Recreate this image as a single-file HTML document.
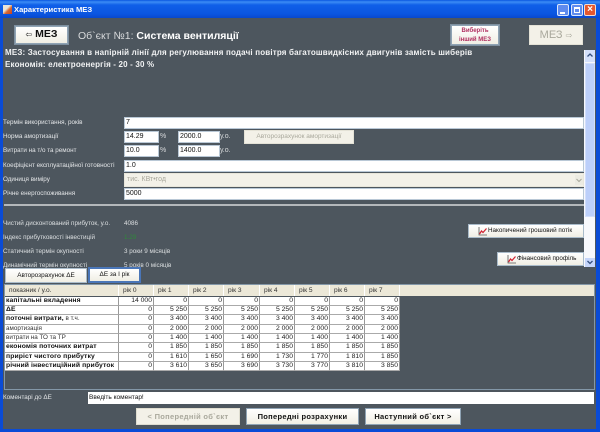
<!DOCTYPE html>
<html><head><meta charset="utf-8">
<style>
html,body{margin:0;padding:0;width:600px;height:432px;overflow:hidden;background:#0a4bd6}
*{box-sizing:border-box}
body{font-family:"Liberation Sans",sans-serif;position:relative}
#w{position:absolute;left:0;top:0;width:600px;height:432px;filter:blur(.3px);overflow:hidden}
.a{position:absolute;white-space:nowrap}
.l{position:absolute;white-space:nowrap;color:#e4e6e8;font-size:6.3px;line-height:12px;left:3px}
.i{position:absolute;background:#fff;color:#111;font-size:7px;line-height:10px;padding-left:1px;border:1px solid #b9c8d6;white-space:nowrap;overflow:hidden}
.u{font-size:7px;line-height:12px;color:#d8dadc}
.r{font-size:6.3px;line-height:12px;color:#dcdfe1}
.b{position:absolute;background:linear-gradient(#fff,#f0eee4);border:1px solid #8fa3b4;text-align:center;color:#111;white-space:nowrap}
.x{outline:1px solid #7d8f9f}
.d{background:#f3f1e8;border:1px solid #e4e2d6;color:#a9a89c}
.c{position:absolute;height:9.33px;background:#fff;border-right:1px solid #999;border-bottom:1px solid #aaa;font-size:6.8px;line-height:8.5px;color:#222;text-align:right;padding-right:1px;white-space:nowrap;overflow:hidden}
.n{text-align:left;padding:0 0 0 1px;color:#333;font-size:6.3px}
.bb{font-weight:bold;font-size:6.8px;letter-spacing:.1px;color:#111}
.h{position:absolute;top:285px;height:11px;font-size:6.6px;line-height:11px;color:#333;padding-left:4px;border-right:1px solid #fff}
.m{font-size:7.5px;line-height:15px;font-weight:bold;letter-spacing:.3px}
</style></head><body>
<div id="w">
<div class="a" style="left:0;top:0;width:600px;height:18px;background:linear-gradient(#0a56e0 0,#3c8cf5 2px,#0f5fe8 5px,#0a55e0 14px,#0848cc 18px)"></div>
<div class="a" style="left:3px;top:5px;width:9px;height:9px;background:linear-gradient(135deg,#e8e4d8 40%,#d86a30 60%,#c84020)"></div>
<div class="a" style="left:14px;top:4px;font-size:7.6px;line-height:12px;color:#fff;font-weight:bold">Характеристика МЕЗ</div>
<div class="a" style="left:557px;top:4px;width:12px;height:12px;background:#5f8bee;border:1px solid #dde8fb;border-radius:2px"><div class="a" style="left:2px;top:7px;width:5px;height:2px;background:#fff"></div></div>
<div class="a" style="left:571px;top:4px;width:12px;height:12px;background:#5f8bee;border:1px solid #dde8fb;border-radius:2px"><div class="a" style="left:2px;top:2px;width:6px;height:6px;border:1px solid #fff;border-top-width:2px"></div></div>
<div class="a" style="left:584px;top:4px;width:12px;height:12px;background:#e4572e;border:1px solid #f4dccf;border-radius:2px;color:#fff;font-size:10px;line-height:10px;text-align:center;font-weight:bold">×</div>

<div class="a" style="left:3px;top:18px;width:593px;height:411px;background:#4d565e"></div>

<div class="b x" style="left:15px;top:26px;width:53px;height:18px;font-size:10.5px;line-height:15px;font-weight:bold"><span style="font-size:8px;font-weight:normal">⇦</span> МЕЗ</div>
<div class="a" style="left:78px;top:29px;font-size:10.5px;line-height:15px;color:#d8dadc">Об`єкт №1: <b style="color:#fff">Система вентиляції</b></div>
<div class="b x" style="left:451px;top:25px;width:48px;height:20px;font-size:6px;line-height:9px;font-weight:bold;color:#b03060;padding-top:1px">Виберіть<br>інший МЕЗ</div>
<div class="b d" style="left:529px;top:25px;width:54px;height:20px;font-size:11px;line-height:18px;">МЕЗ <span style="font-size:8px">⇨</span></div>
<div class="a" style="left:5px;top:47px;font-size:8px;line-height:12px;color:#f2f3f4;font-weight:bold;letter-spacing:.17px">МЕЗ: Застосування в напірній лінії для регулювання подачі повітря багатошвидкісних двигунів замість шиберів</div>
<div class="a" style="left:5px;top:59px;font-size:8px;line-height:12px;color:#f2f3f4;font-weight:bold;letter-spacing:.17px">Економія: електроенергія - 20 - 30 %</div>

<div class="a" style="left:584px;top:50px;width:11px;height:217px;background:#f7f8fc"></div>
<div class="a" style="left:585px;top:50px;width:10px;height:12px;background:#d4e0fb"><svg width="10" height="12" style="display:block"><path d="M2.5 6.5L5 4L7.5 6.5" fill="none" stroke="#35507f" stroke-width="1.3"/></svg></div>
<div class="a" style="left:585px;top:63px;width:10px;height:154px;background:#bccffa;border:1px solid #d2defb"></div>
<div class="a" style="left:585px;top:258px;width:10px;height:9px;background:#c6d6fa"><svg width="10" height="9" style="display:block"><path d="M2.5 3L5 5.5L7.5 3" fill="none" stroke="#35507f" stroke-width="1.3"/></svg></div>

<div class="l" style="top:117px">Термін використання, років</div>
<div class="i" style="left:124px;top:117px;width:460px;height:12px">7</div>
<div class="l" style="top:131px">Норма амортизації</div>
<div class="i" style="left:124px;top:131px;width:35px;height:12px">14.29</div>
<div class="a u" style="left:160px;top:131px">%</div>
<div class="i" style="left:178px;top:131px;width:42px;height:12px">2000.0</div>
<div class="a u" style="left:220px;top:131px">у.о.</div>
<div class="b d" style="left:244px;top:130px;width:110px;height:14px;font-size:6.5px;line-height:12px">Авторозрахунок амортизації</div>
<div class="l" style="top:145px">Витрати на т/о та ремонт</div>
<div class="i" style="left:124px;top:145px;width:35px;height:12px">10.0</div>
<div class="a u" style="left:160px;top:145px">%</div>
<div class="i" style="left:178px;top:145px;width:42px;height:12px">1400.0</div>
<div class="a u" style="left:220px;top:145px">у.о.</div>
<div class="l" style="top:160px">Коефіцієнт експлуатаційної готовності</div>
<div class="i" style="left:124px;top:160px;width:460px;height:12px">1.0</div>
<div class="l" style="top:174px">Одиниця виміру</div>
<div class="i" style="left:124px;top:173px;width:460px;height:14px;background:#f3f1e8;border-color:#e8e6da;color:#a9a89c;line-height:12px;padding-left:2px">тис. КВт•год</div>
<div class="a" style="left:575px;top:175px;width:8px;height:10px;background:#ecebe2"><svg width="8" height="10" style="display:block"><path d="M1.5 4L4 6.5L6.5 4" fill="none" stroke="#a9a89c" stroke-width="1"/></svg></div>
<div class="l" style="top:188px">Річне енергоспоживання</div>
<div class="i" style="left:124px;top:188px;width:460px;height:12px">5000</div>
<div class="a" style="left:4px;top:204px;width:580px;height:2px;background:#b4b8bb"></div>

<div class="l" style="top:218px;color:#dcdfe1">Чистий дисконтований прибуток, у.о.</div>
<div class="a r" style="left:124px;top:218px">4086</div>
<div class="l" style="top:232px;color:#dcdfe1">Індекс прибутковості інвестицій</div>
<div class="a r" style="left:124px;top:232px;color:#2f8a3a">1.29</div>
<div class="l" style="top:246px;color:#dcdfe1">Статичний термін окупності</div>
<div class="a r" style="left:124px;top:246px">3 роки 9 місяців</div>
<div class="l" style="top:260px;color:#dcdfe1">Динамічний термін окупності</div>
<div class="a r" style="left:124px;top:260px">5 років 0 місяців</div>

<div class="b" style="left:468px;top:224px;width:116px;height:14px;font-size:6.3px;line-height:12px;text-align:left;padding-left:19px;border-color:#a9bbca"><svg class="a" style="left:9px;top:2px" width="9" height="9"><path d="M1 0V8H9" fill="none" stroke="#555" stroke-width=".8"/><path d="M1.5 7L3.5 4L5 5.5L8.5 1.5" fill="none" stroke="#d02030" stroke-width="1.2"/></svg>Накопичений грошовий потік</div>
<div class="b" style="left:497px;top:252px;width:87px;height:14px;font-size:6.3px;line-height:12px;text-align:left;padding-left:19px;border-color:#a9bbca"><svg class="a" style="left:9px;top:2px" width="9" height="9"><path d="M1 0V8H9" fill="none" stroke="#555" stroke-width=".8"/><path d="M1.5 7L3.5 4L5 5.5L8.5 1.5" fill="none" stroke="#d02030" stroke-width="1.2"/></svg>Фінансовий профіль</div>

<div class="a" style="left:4px;top:268px;width:584px;height:16px;background:#4d565e"></div>
<div class="b" style="left:5px;top:268px;width:82px;height:15px;font-size:6.4px;line-height:13px;border-color:#a9bbca">Авторозрахунок ΔЕ</div>
<div class="b" style="left:88px;top:267px;width:53px;height:16px;font-size:6.4px;line-height:12px;border:2px solid #4a76b8">ΔЕ за І рік</div>

<div class="a" style="left:4px;top:284px;width:591px;height:106px;border:1px solid #8397a8;background:#4d565e"></div>
<div class="a" style="left:5px;top:285px;width:589px;height:11px;background:#ece8d8"></div>
<div class="h" style="left:5px;width:114px">показник / у.о.</div>
<div class="h" style="left:119px;width:35px">рік 0</div>
<div class="h" style="left:154px;width:35px">рік 1</div>
<div class="h" style="left:189px;width:35px">рік 2</div>
<div class="h" style="left:224px;width:36px">рік 3</div>
<div class="h" style="left:260px;width:35px">рік 4</div>
<div class="h" style="left:295px;width:35px">рік 5</div>
<div class="h" style="left:330px;width:35px">рік 6</div>
<div class="h" style="left:365px;width:35px">рік 7</div>

<div id="t">
<div class="c n bb" style="left:5px;top:296.5px;width:114px">капітальні вкладення</div><div class="c" style="left:119px;top:296.5px;width:35px">14 000</div><div class="c" style="left:154px;top:296.5px;width:35px">0</div><div class="c" style="left:189px;top:296.5px;width:35px">0</div><div class="c" style="left:224px;top:296.5px;width:36px">0</div><div class="c" style="left:260px;top:296.5px;width:35px">0</div><div class="c" style="left:295px;top:296.5px;width:35px">0</div><div class="c" style="left:330px;top:296.5px;width:35px">0</div><div class="c" style="left:365px;top:296.5px;width:35px">0</div>
<div class="c n bb" style="left:5px;top:305.8px;width:114px">ΔЕ</div><div class="c" style="left:119px;top:305.8px;width:35px">0</div><div class="c" style="left:154px;top:305.8px;width:35px">5 250</div><div class="c" style="left:189px;top:305.8px;width:35px">5 250</div><div class="c" style="left:224px;top:305.8px;width:36px">5 250</div><div class="c" style="left:260px;top:305.8px;width:35px">5 250</div><div class="c" style="left:295px;top:305.8px;width:35px">5 250</div><div class="c" style="left:330px;top:305.8px;width:35px">5 250</div><div class="c" style="left:365px;top:305.8px;width:35px">5 250</div>
<div class="c n" style="left:5px;top:315.2px;width:114px"><b style="font-size:6.8px;letter-spacing:.1px;color:#111">поточні витрати,</b> в т.ч.</div><div class="c" style="left:119px;top:315.2px;width:35px">0</div><div class="c" style="left:154px;top:315.2px;width:35px">3 400</div><div class="c" style="left:189px;top:315.2px;width:35px">3 400</div><div class="c" style="left:224px;top:315.2px;width:36px">3 400</div><div class="c" style="left:260px;top:315.2px;width:35px">3 400</div><div class="c" style="left:295px;top:315.2px;width:35px">3 400</div><div class="c" style="left:330px;top:315.2px;width:35px">3 400</div><div class="c" style="left:365px;top:315.2px;width:35px">3 400</div>
<div class="c n" style="left:5px;top:324.5px;width:114px">амортизація</div><div class="c" style="left:119px;top:324.5px;width:35px">0</div><div class="c" style="left:154px;top:324.5px;width:35px">2 000</div><div class="c" style="left:189px;top:324.5px;width:35px">2 000</div><div class="c" style="left:224px;top:324.5px;width:36px">2 000</div><div class="c" style="left:260px;top:324.5px;width:35px">2 000</div><div class="c" style="left:295px;top:324.5px;width:35px">2 000</div><div class="c" style="left:330px;top:324.5px;width:35px">2 000</div><div class="c" style="left:365px;top:324.5px;width:35px">2 000</div>
<div class="c n" style="left:5px;top:333.8px;width:114px">витрати на ТО та ТР</div><div class="c" style="left:119px;top:333.8px;width:35px">0</div><div class="c" style="left:154px;top:333.8px;width:35px">1 400</div><div class="c" style="left:189px;top:333.8px;width:35px">1 400</div><div class="c" style="left:224px;top:333.8px;width:36px">1 400</div><div class="c" style="left:260px;top:333.8px;width:35px">1 400</div><div class="c" style="left:295px;top:333.8px;width:35px">1 400</div><div class="c" style="left:330px;top:333.8px;width:35px">1 400</div><div class="c" style="left:365px;top:333.8px;width:35px">1 400</div>
<div class="c n bb" style="left:5px;top:343.2px;width:114px">економія поточних витрат</div><div class="c" style="left:119px;top:343.2px;width:35px">0</div><div class="c" style="left:154px;top:343.2px;width:35px">1 850</div><div class="c" style="left:189px;top:343.2px;width:35px">1 850</div><div class="c" style="left:224px;top:343.2px;width:36px">1 850</div><div class="c" style="left:260px;top:343.2px;width:35px">1 850</div><div class="c" style="left:295px;top:343.2px;width:35px">1 850</div><div class="c" style="left:330px;top:343.2px;width:35px">1 850</div><div class="c" style="left:365px;top:343.2px;width:35px">1 850</div>
<div class="c n bb" style="left:5px;top:352.5px;width:114px">приріст чистого прибутку</div><div class="c" style="left:119px;top:352.5px;width:35px">0</div><div class="c" style="left:154px;top:352.5px;width:35px">1 610</div><div class="c" style="left:189px;top:352.5px;width:35px">1 650</div><div class="c" style="left:224px;top:352.5px;width:36px">1 690</div><div class="c" style="left:260px;top:352.5px;width:35px">1 730</div><div class="c" style="left:295px;top:352.5px;width:35px">1 770</div><div class="c" style="left:330px;top:352.5px;width:35px">1 810</div><div class="c" style="left:365px;top:352.5px;width:35px">1 850</div>
<div class="c n bb" style="left:5px;top:361.8px;width:114px">річний інвестиційний прибуток</div><div class="c" style="left:119px;top:361.8px;width:35px">0</div><div class="c" style="left:154px;top:361.8px;width:35px">3 610</div><div class="c" style="left:189px;top:361.8px;width:35px">3 650</div><div class="c" style="left:224px;top:361.8px;width:36px">3 690</div><div class="c" style="left:260px;top:361.8px;width:35px">3 730</div><div class="c" style="left:295px;top:361.8px;width:35px">3 770</div><div class="c" style="left:330px;top:361.8px;width:35px">3 810</div><div class="c" style="left:365px;top:361.8px;width:35px">3 850</div>
</div>

<div class="l" style="top:392px">Коментарі до ΔЕ</div>
<div class="i" style="left:88px;top:392px;width:506px;height:12px;border:none;line-height:12px;padding-left:1px;font-size:6.5px">Введіть коментар!</div>
<div class="b d m" style="left:136px;top:408px;width:104px;height:17px;border-color:#dfddd0">&lt; Попередній об`єкт</div>
<div class="b m" style="left:246px;top:408px;width:113px;height:17px">Попередні розрахунки</div>
<div class="b m" style="left:365px;top:408px;width:96px;height:17px">Наступний об`єкт &gt;</div>
</div>
</body></html>
